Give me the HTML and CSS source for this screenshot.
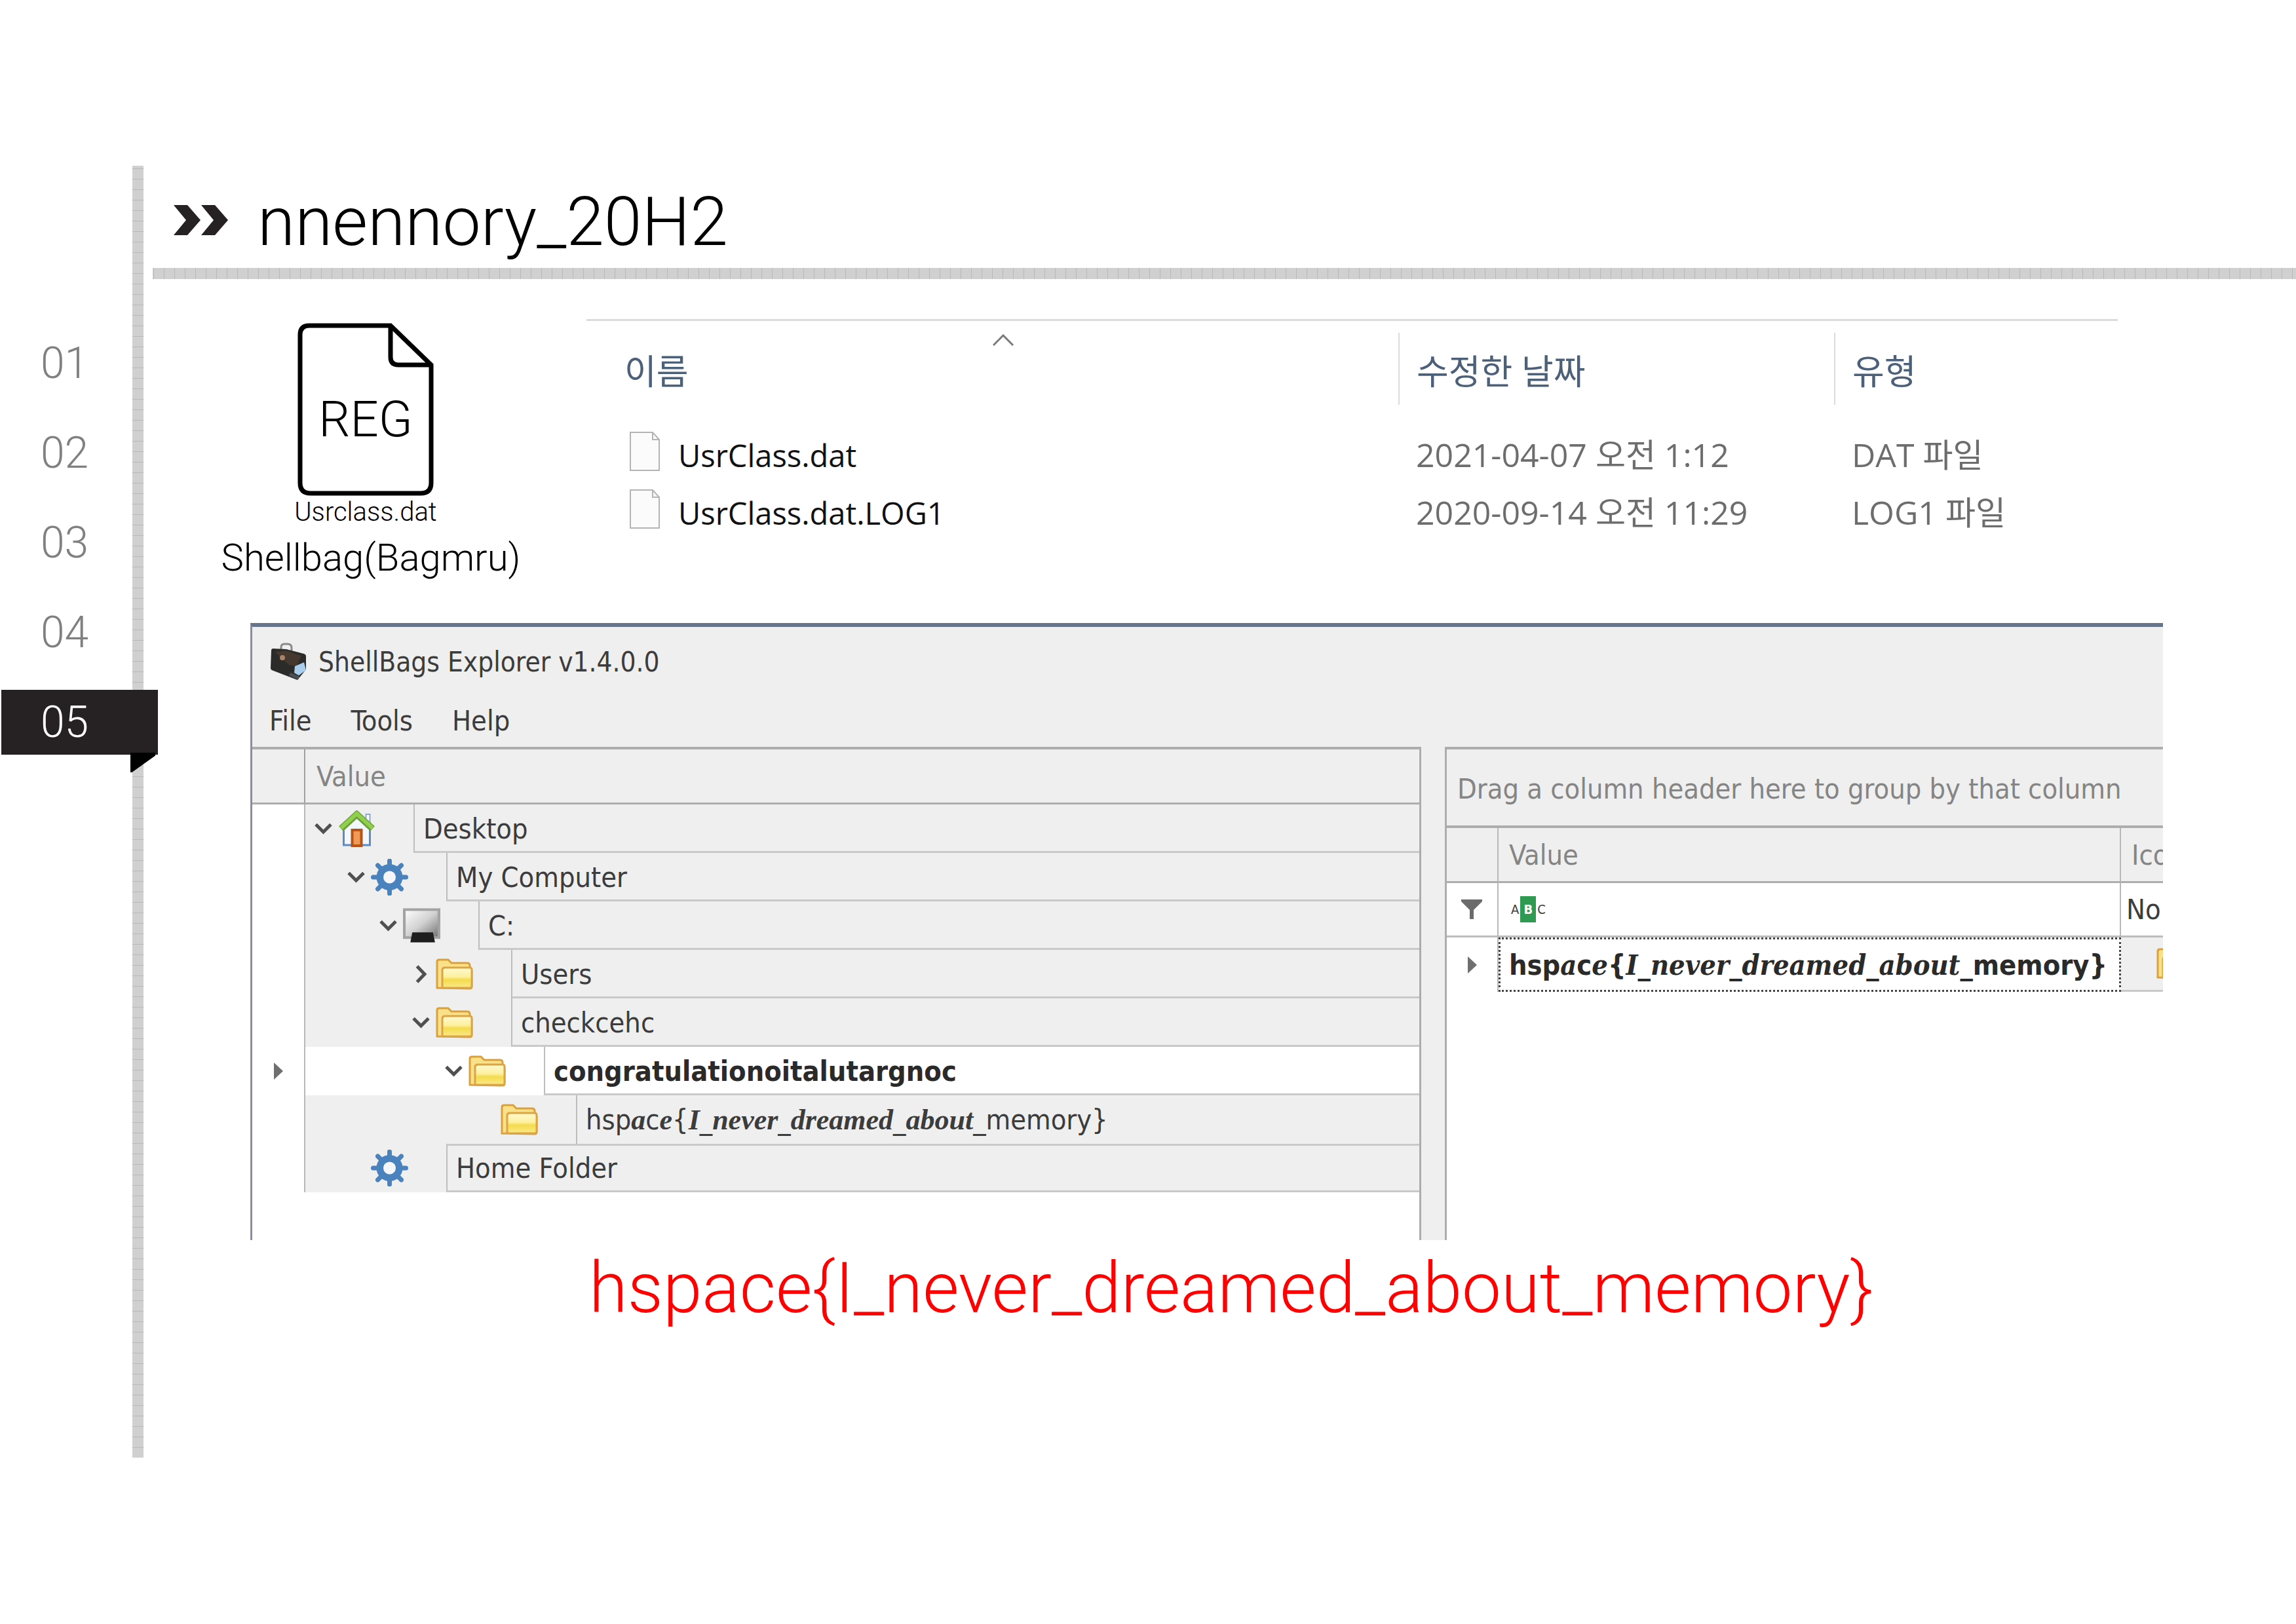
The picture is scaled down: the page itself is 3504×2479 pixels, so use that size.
FILE: index.html
```html
<!DOCTYPE html>
<html lang="ko">
<head>
<meta charset="utf-8">
<title>nnennory_20H2</title>
<link rel="stylesheet" href="styles.css">
</head>
<body>
<svg class="defs" aria-hidden="true">
  <defs>
    <linearGradient id="folder-fill" x1="0" y1="0" x2="0" y2="1">
      <stop offset="0" stop-color="#fff9cf"/><stop offset="0.45" stop-color="#fdf0a0"/><stop offset="0.6" stop-color="#f4dc4e"/><stop offset="1" stop-color="#fbe98a"/>
    </linearGradient>
    <linearGradient id="screen-fill" x1="0" y1="0" x2="1" y2="1">
      <stop offset="0" stop-color="#ffffff"/><stop offset="0.5" stop-color="#d2d2d2"/><stop offset="1" stop-color="#6e6e6e"/>
    </linearGradient>
    <symbol id="chevron-down" viewBox="0 0 27 18"><path d="M2 2.500 13.500 14 25 2.500" fill="none" stroke="#505050" stroke-width="5"/></symbol>
    <symbol id="chevron-right" viewBox="0 0 18 28"><path d="M2.500 2 14 14 2.500 26" fill="none" stroke="#505050" stroke-width="5"/></symbol>
    <symbol id="folder" viewBox="0 0 57 48">
      <path d="M2 45V5q0-3 3-3h14l5 5h24q4 0 4 4v6l3 2v24q0 3-3 3z" fill="#fbe08a" stroke="#d9a13c" stroke-width="3"/>
      <path d="M10 45V18q0-4 4-4h38q3 0 3 3v25q0 3-3 3z" fill="url(#folder-fill)" stroke="#dba544" stroke-width="3"/>
    </symbol>
    <symbol id="gear" viewBox="0 0 56 56">
      <g stroke="#4a82bd" stroke-width="7" stroke-linecap="round">
        <path d="M28 3v50M3 28h50M10 10l36 36M46 10 10 46"/>
      </g>
      <circle cx="28" cy="28" r="20" fill="#4a82bd"/>
      <circle cx="28" cy="28" r="9.500" fill="#f4f6f9"/>
    </symbol>
    <symbol id="house" viewBox="0 0 56 56">
      <path d="M42 6h6v14h-6z" fill="#fff" stroke="#8aa9cc" stroke-width="2"/>
      <path d="M8 26 28 8l20 18v27H8z" fill="#f3f8fd" stroke="#5b8cc8" stroke-width="3"/>
      <path d="M21 30h14v24H21z" fill="#f09a55" stroke="#b5531a" stroke-width="4"/>
      <path d="M4 28 28 6l24 22" fill="none" stroke="#6c9f3c" stroke-width="10"/>
      <path d="M4 27 28 5l24 22" fill="none" stroke="#90cf4c" stroke-width="6"/>
    </symbol>
    <symbol id="drive" viewBox="0 0 56 52">
      <path d="M2 2h52v42H2z" fill="url(#screen-fill)" stroke="#a3a3a3" stroke-width="4"/>
      <path d="M14 36h31l3 15H11z" fill="#1e1e1e"/>
    </symbol>
    <symbol id="play" viewBox="0 0 14 26"><path d="M0 0 14 13 0 26z" fill="#6f6f6f"/></symbol>
    <symbol id="blank-file" viewBox="0 0 46 60">
      <path d="M1 1h34l10 11v47H1z" fill="#fbfbfb" stroke="#b4b4b4" stroke-width="2"/>
      <path d="M35 1v11h10" fill="none" stroke="#b4b4b4" stroke-width="2"/>
    </symbol>
  </defs>
</svg>

<div class="slide">
  <nav class="chapters" aria-label="Chapters">
    <a href="#c1">01</a>
    <a href="#c2">02</a>
    <a href="#c3">03</a>
    <a href="#c4">04</a>
    <a href="#c5" class="current" aria-current="page">05</a>
  </nav>
  <div class="rail"></div>

  <main class="content">
    <header class="heading">
      <svg class="marker" viewBox="0 0 83 46" aria-hidden="true">
        <path d="M0 0h21l20 23-20 23H0l19-23zM42 0h21l20 23-20 23H42l19-23z" fill="#262122"/>
      </svg>
      <h1>nnennory_20H2</h1>
    </header>
    <div class="rule"></div>

    <section class="evidence">
      <div class="artifact">
        <figure>
          <svg class="reg-file" viewBox="0 0 208 264" role="img" aria-label="REG file">
            <path d="M18 4H142L204 64V244Q204 260 188 260H20Q4 260 4 244V18Q4 4 18 4Z" fill="#fff" stroke="#000" stroke-width="7"/>
            <path d="M142 4V52Q142 64 154 64H204" fill="none" stroke="#000" stroke-width="7"/>
            <text x="104" y="173" text-anchor="middle" class="reg-text">REG</text>
          </svg>
          <figcaption>Usrclass.dat</figcaption>
        </figure>
        <p class="artifact-name">Shellbag(Bagmru)</p>
      </div>

      <table class="files">
        <colgroup><col><col class="col-date"><col class="col-type"></colgroup>
        <thead>
          <tr>
            <th><span class="plain">이름</span>
              <svg class="sort" viewBox="0 0 32 18" aria-hidden="true"><path d="M1 17 16 2l15 15" fill="none" stroke="#7a7a7a" stroke-width="3"/></svg></th>
            <th><span>수정한 날짜</span></th>
            <th><span>유형</span></th>
          </tr>
        </thead>
        <tbody>
          <tr>
            <td class="name"><div><svg aria-hidden="true"><use href="#blank-file"/></svg><span>UsrClass.dat</span></div></td>
            <td>2021-04-07 오전 1:12</td>
            <td>DAT 파일</td>
          </tr>
          <tr>
            <td class="name"><div><svg aria-hidden="true"><use href="#blank-file"/></svg><span>UsrClass.dat.LOG1</span></div></td>
            <td>2020-09-14 오전 11:29</td>
            <td>LOG1 파일</td>
          </tr>
        </tbody>
      </table>
    </section>

    <section class="window">
      <div class="titlebar">
        <svg class="bag" viewBox="0 0 56 58" aria-hidden="true">
          <path d="M17 12V7q0-5 5-5h5q6 0 6 6v5" fill="none" stroke="#8a8a8a" stroke-width="3"/>
          <path d="M2 12q0-3 3-3l20 1 27 7q3 1 3 4v20L42 57 3 42q-2-1-2-3z" fill="#2b2b29"/>
          <path d="M8 14 24 12l24 8-7 16-12-2z" fill="#44382f"/>
          <circle cx="19" cy="23" r="4" fill="#a98268"/>
          <path d="M38 36l14-6 3 12-11 8-7-4z" fill="#a9cdec"/>
          <path d="M30 48l14 6" stroke="#4a4f55" stroke-width="5"/>
        </svg>
        <span>ShellBags Explorer v1.4.0.0</span>
      </div>
      <div class="menu">
        <button type="button">File</button>
        <button type="button">Tools</button>
        <button type="button">Help</button>
      </div>
      <div class="panes">
        <div class="pane tree-pane">
          <table class="tree">
            <colgroup><col class="col-gutter"><col></colgroup>
            <thead><tr><th></th><th>Value</th></tr></thead>
            <tbody>
              <tr><td></td><td><div class="node d0"><span class="lead"><svg class="down"><use href="#chevron-down"/></svg><svg class="icon"><use href="#house"/></svg></span><span class="label">Desktop</span></div></td></tr>
              <tr><td></td><td><div class="node d1"><span class="lead"><svg class="down"><use href="#chevron-down"/></svg><svg class="icon"><use href="#gear"/></svg></span><span class="label">My Computer</span></div></td></tr>
              <tr><td></td><td><div class="node d2"><span class="lead"><svg class="down"><use href="#chevron-down"/></svg><svg class="icon"><use href="#drive"/></svg></span><span class="label">C:</span></div></td></tr>
              <tr><td></td><td><div class="node d3"><span class="lead"><svg class="right"><use href="#chevron-right"/></svg><svg class="icon"><use href="#folder"/></svg></span><span class="label">Users</span></div></td></tr>
              <tr><td></td><td><div class="node d3"><span class="lead"><svg class="down"><use href="#chevron-down"/></svg><svg class="icon"><use href="#folder"/></svg></span><span class="label">checkcehc</span></div></td></tr>
              <tr class="selected"><td><svg class="pointer"><use href="#play"/></svg></td><td><div class="node d4"><span class="lead"><svg class="down"><use href="#chevron-down"/></svg><svg class="icon"><use href="#folder"/></svg></span><span class="label">congratulationoitalutargnoc</span></div></td></tr>
              <tr><td></td><td><div class="node d5"><span class="lead"><svg class="icon"><use href="#folder"/></svg></span><span class="label last">hsp<i>a</i>c<i>e</i>{<i>I</i>_<i>never</i>_<i>dreamed</i>_<i>about</i>_memory}</span></div></td></tr>
              <tr><td></td><td><div class="node d1"><span class="lead"><svg class="icon"><use href="#gear"/></svg></span><span class="label outdent">Home Folder</span></div></td></tr>
            </tbody>
          </table>
        </div>
        <div class="splitter"></div>
        <div class="pane grid-pane">
          <p class="group-hint">Drag a column header here to group by that column</p>
          <table class="grid">
            <colgroup><col class="col-mark"><col><col class="col-icon"></colgroup>
            <thead><tr><th></th><th>Value</th><th>Icon</th></tr></thead>
            <tbody>
              <tr class="filter">
                <td><svg class="funnel" viewBox="0 0 32 30" aria-label="Filter"><path d="M0 0h32v3L19 16v14h-6V16L0 3z" fill="#6b6b6b"/></svg></td>
                <td><label class="abc"><span>A</span><b>B</b><span>C</span><input type="text" aria-label="Filter value"></label></td>
                <td class="no">No</td>
              </tr>
              <tr class="entry">
                <td><svg class="pointer"><use href="#play"/></svg></td>
                <td class="focus">hsp<i>a</i>c<i>e</i>{<i>I</i>_<i>never</i>_<i>dreamed</i>_<i>about</i>_memory}</td>
                <td class="clip"><svg class="icon"><use href="#folder"/></svg></td>
              </tr>
            </tbody>
          </table>
        </div>
      </div>
    </section>

    <p class="answer">hspace{I_never_dreamed_about_memory}</p>
  </main>
</div>
</body>
</html>
```
FILE: styles.css
```css
* { box-sizing: border-box; }
body { margin: 0; background: #fff; color: #000; font-family: Roboto, "Noto Sans CJK KR", sans-serif; font-weight: 300; }
h1, p, figure { margin: 0; font-weight: 300; }
table { border-collapse: separate; border-spacing: 0; table-layout: fixed; width: 100%; }
th, td { padding: 0; text-align: left; font-weight: 400; white-space: nowrap; }
svg { display: block; flex: none; }
.defs { position: absolute; width: 0; height: 0; }

.slide { display: grid; grid-template-columns: 202px 17px 1fr; padding: 253px 0; }

/* chapter navigation */
.chapters { display: flex; flex-direction: column; gap: 38px; padding-top: 252px; }
.chapters a { height: 99px; padding-left: 62px; line-height: 99px; font-size: 66px; color: #808080; text-decoration: none; }
.chapters .current { position: relative; z-index: 1; width: 241px; border-left: 2px solid #fff; padding-left: 60px; background: #262122; color: #fff; }
.current::after { content: ""; position: absolute; right: 4px; top: 96px; width: 38px; height: 30px; background: #000; clip-path: polygon(0 0, 100% 0, 100% 15%, 6% 100%, 0 100%); }
.rail { background: repeating-linear-gradient(to bottom, #d0d0d0 0 4px, #b8b8b8 4px 5px, #d0d0d0 5px 16px); }

/* heading */
.heading { display: flex; align-items: center; height: 156px; padding-left: 46px; gap: 45px; }
.marker { width: 83px; height: 46px; margin-top: 10px; }
.heading h1 { font-size: 104px; line-height: 160px; padding-top: 16px; }
.rule { height: 17px; margin-left: 14px; background: repeating-linear-gradient(to right, #d0d0d0 0 1px, #b8b8b8 1px 2px, #d0d0d0 2px 16px); }

/* registry file and its folder listing */
.evidence { display: flex; padding: 61px 272px 0 14px; }
.artifact { flex: none; width: 662px; padding-top: 6px; text-align: center; }
.artifact figure { padding-right: 12px; }
.reg-file { width: 208px; height: 264px; margin: 0 auto; }
.reg-text { font: 300 76px Roboto, sans-serif; }
.artifact figcaption { font-size: 40px; line-height: 50px; }
.artifact-name { padding-left: 4px; font-size: 58px; line-height: 88px; }

.files { flex: 1; border-top: 3px solid #dcdcdc; font-family: "Open Sans", "Noto Sans CJK KR", sans-serif; font-size: 50px; align-self: flex-start; }
.col-date { width: 665px; }
.col-type { width: 433px; }
.files th { position: relative; height: 155px; padding-top: 18px; vertical-align: top; font-size: 53px; color: #4c607a; }
.files th span { display: block; height: 110px; padding-left: 26px; line-height: 118px; border-left: 2px solid #dcdcdc; }
.files th .plain { padding-left: 56px; border-left-color: transparent; }
.sort { position: absolute; left: 50%; top: 20px; width: 32px; height: 18px; }
.files td { height: 88px; padding: 4px 0 0 27px; color: #6d6d6d; }
.files .name { padding: 0 0 0 66px; font-size: 47px; color: #111; }
.name div { display: flex; align-items: center; gap: 28px; }
.name svg { width: 46px; height: 60px; }
.name span { padding-top: 12px; line-height: 60px; }

/* application window */
.window { margin: 56px 203px 0 163px; border-top: 6px solid #66758c; border-left: 3px solid #8b8d99; background: #efefef; color: #3c3c3c; font-family: "DejaVu Sans Condensed", "DejaVu Sans", sans-serif; font-size: 43px; font-weight: 400; }
.titlebar { display: flex; align-items: center; gap: 18px; height: 106px; padding-left: 27px; font-size: 42px; }
.bag { width: 56px; height: 58px; }
.menu { display: flex; gap: 60px; height: 77px; padding-left: 26px; }
.menu button { padding: 0 0 4px; border: 0; background: none; color: inherit; font: inherit; }
.panes { display: grid; grid-template-columns: 1784fr 36px 1096fr; }
.pane { min-width: 0; overflow: hidden; border-top: 4px solid #adadad; background: #fff; }
.tree-pane { border-right: 3px solid #adadad; padding-bottom: 73px; }
.grid-pane { border-left: 3px solid #adadad; }
.panes th { height: 84px; border-bottom: 3px solid #adadad; background: #efefef; color: #858585; }
i { font-family: "Liberation Serif", serif; font-weight: 700; font-size: 44px; }

.col-gutter { width: 81px; }
.tree th:first-child { border-right: 2px solid #a0a0a0; }
.tree th:last-child { padding-left: 17px; }
.tree td { height: 74px; }
.tree td:first-child { border-right: 2px solid #b8b8b8; padding-left: 33px; }
.pointer { width: 14px; height: 26px; }
.node { display: flex; height: 74px; background: #efefef; }
.selected .node { background: #fff; font-weight: 700; color: #2a2a2a; }
.lead { display: flex; flex: none; align-items: center; justify-content: flex-end; gap: 9px; padding-right: 58px; }
.d0 .lead { width: 165px; }
.d1 .lead { width: 215px; }
.d2 .lead { width: 264px; }
.d3 .lead { width: 314px; }
.d4 .lead { width: 364px; }
.d5 .lead { width: 413px; }
.label { flex: 1; padding-left: 13px; border-left: 2px solid #bdbdbd; border-bottom: 3px solid #c9c9c9; line-height: 74px; }
.label.last { border-bottom: 0; }
.label.outdent { border-top: 3px solid #c9c9c9; line-height: 68px; }
.icon { width: 57px; height: 56px; }
.down { width: 27px; height: 18px; }
.right { width: 18px; height: 28px; margin-right: 4px; }

.splitter { background: #efefef; }
.group-hint { height: 120px; padding-left: 16px; line-height: 120px; border-bottom: 4px solid #adadad; background: #efefef; color: #858585; font-weight: 400; white-space: nowrap; }
.col-mark { width: 79px; }
.col-icon { width: 64px; }
.grid th, .grid td { overflow: hidden; border-right: 2px solid #b8b8b8; }
.grid th:last-child, .grid td:last-child { border-right: 0; }
.grid th { padding-left: 16px; }
.grid td { height: 83px; }
.filter td { border-bottom: 3px solid #bdbdbd; }
.funnel { width: 32px; height: 30px; margin-left: 22px; }
.abc { display: flex; align-items: center; padding-left: 19px; font-size: 20px; line-height: 40px; }
.abc b { width: 24px; margin: 0 2px; background: #2f9a52; color: #fff; text-align: center; }
.abc input { flex: 1; border: 0; outline: 0; background: none; font: inherit; }
.grid .no { padding-left: 8px; }
.entry .pointer { margin-left: 32px; }
.grid .focus { padding-left: 13px; border: 3px dotted #444; font-weight: 700; color: #2a2a2a; }
.focus i { font-family: "DejaVu Serif Condensed", "DejaVu Serif", serif; font-size: 43px; }
.grid .clip { padding-left: 54px; border-bottom: 3px solid #c9c9c9; background: #efefef; }

.answer { padding: 4px 0 188px 680px; font-size: 107px; line-height: 140px; color: #f00; }
```
